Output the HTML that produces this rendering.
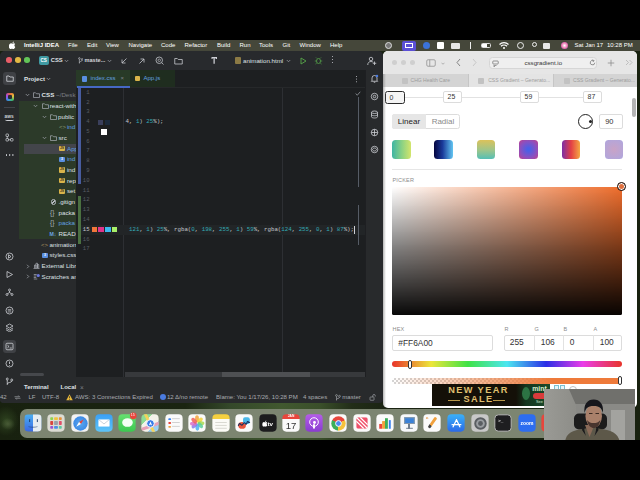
<!DOCTYPE html>
<html><head><meta charset="utf-8">
<style>
*{box-sizing:border-box;margin:0;padding:0}
html,body{width:640px;height:480px;overflow:hidden;background:#000;font-family:"Liberation Sans",sans-serif;}
#root{position:absolute;left:0;top:0;width:640px;height:480px;overflow:hidden;background:#000}
.abs{position:absolute}
#wall{left:0;top:40px;width:640px;height:400px;background:radial-gradient(ellipse 7px 6px at 8px 384px,rgba(110,130,85,.45),rgba(0,0,0,0) 100%),radial-gradient(ellipse 13px 15px at 6px 381px,rgba(55,80,38,.7),rgba(0,0,0,0) 100%),linear-gradient(90deg,#18210f 0,#1a2411 29%,#34482a 36%,#41582f 44%,#3a4f2a 50%,#222d18 55%,#1b2413 60%,#18210f 100%)}
#menubar{left:0;top:40px;width:640px;height:11px;background:#45473a;color:#fff;font-size:6.0px;line-height:11px;white-space:nowrap}
#menubar span{position:absolute;top:0}
/* IDE */
#ide{left:0;top:51px;width:383px;height:352px;background:#1d1f21;border-radius:5px 5px 4px 4px;overflow:hidden}
#ide .title{left:0;top:0;width:383px;height:19px;background:#282a2d}
.tl{position:absolute;width:5.6px;height:5.6px;border-radius:50%;top:6.4px}
#strip{left:0;top:19px;width:19px;height:333px;background:#282a2c;border-right:1px solid #282a2c}
#proj{left:19px;top:19px;width:57px;height:308px;background:#282a2c;overflow:hidden}
#rstrip{left:365px;top:19px;width:18px;height:322px;background:#282a2c;border-left:1px solid #1e1f22}
#tabs{left:76px;top:19px;width:289px;height:18px;background:#1d1f21;border-bottom:1px solid #26282a}
#editor{left:76px;top:37px;width:289px;height:289px;background:#1d1f21;overflow:hidden}
.ln{position:absolute;left:3.5px;width:10px;text-align:right;font-size:5.6px;color:#4b5059;font-family:"Liberation Mono",monospace}
.code{position:absolute;font-family:"Liberation Mono",monospace;font-size:5.77px;color:#c6c8cc;white-space:pre}
.num{color:#33aab6}
.tree{position:absolute;font-size:6.2px;color:#e6e8ec;white-space:nowrap;line-height:10px;height:10px}
#term{left:19px;top:326px;width:364px;height:14px;background:#282a2c}
#status{left:0;top:340px;width:383px;height:12px;background:#282a2c;color:#a8abb0;font-size:6.05px;line-height:12px;white-space:nowrap}
#status span{position:absolute;top:0}
/* Browser */
#br{left:383.3px;top:51px;width:254.2px;height:357px;background:#fff;border-radius:5px;overflow:hidden}
#br .tb{left:0;top:0;width:255px;height:23px;background:#e6e6e6}
#br .tabsb{left:0;top:23px;width:255px;height:12.6px;background:#d4d4d4;font-size:5.05px;color:#9c9c9c;line-height:13px;white-space:nowrap}
.inp{position:absolute;background:#fff;border:0.7px solid #dcdcdc;border-radius:2px;font-size:6.9px;color:#333;text-align:left;padding-left:3.6px}
.lbl{position:absolute;font-size:5.5px;color:#8c8c8c;letter-spacing:.2px}
.sw{position:absolute;top:86px;width:19px;height:19px;border-radius:3.5px}
/* Dock */
#dock{left:20px;top:409px;width:600px;height:28.5px;background:#7c8571;border-radius:7px;opacity:1}
.ic{position:absolute;top:3.5px;width:18px;height:18px;border-radius:4.2px;background:#fff;transform:scale(.96)}
#cam{left:544px;top:389px;width:90.5px;height:50.5px;background:#8d8f8e;overflow:hidden}
</style></head><body><div id="root">
<div id="wall" class="abs"></div>
<div id="menubar" class="abs"><svg class="abs" style="left:8.8px;top:1.3px" width="7" height="8.2" viewBox="0 0 16 18"><path fill="#fff" d="M11.2 1c.1 1-.3 2-.9 2.700-.6.700-1.600 1.300-2.500 1.200-.1-1 .4-2 .9-2.600C9.300 1.600 10.400 1.100 11.200 1zM14.300 13.200c-.4 1-.6 1.400-1.200 2.300-.8 1.200-1.800 2.700-3.200 2.700-1.200 0-1.500-.8-3.100-.8-1.600 0-2 .8-3.200.8-1.300 0-2.300-1.400-3.100-2.600C-1.100 12.300-.1 8.300 1.500 6.600c.9-1 2.100-1.600 3.300-1.600 1.300 0 2.100.8 3.200.8 1 0 1.700-.8 3.200-.8 1.100 0 2.200.6 3 1.600-2.700 1.500-2.200 5.300.1 6.600z"/></svg><span style="left:24px;font-weight:bold;">IntelliJ IDEA</span><span style="left:68px;">File</span><span style="left:87px;">Edit</span><span style="left:106px;">View</span><span style="left:128.5px;">Navigate</span><span style="left:161px;">Code</span><span style="left:184.5px;">Refactor</span><span style="left:217px;">Build</span><span style="left:239.5px;">Run</span><span style="left:259px;">Tools</span><span style="left:282.5px;">Git</span><span style="left:299.5px;">Window</span><span style="left:330px;">Help</span><span style="left:574.5px">Sat Jan 17</span><span style="left:607px">10:28 PM</span><div class="abs" style="left:384.5px;top:2px;width:7px;height:7px;border-radius:50%;border:1px solid #ddd;background:#777"></div><div class="abs" style="left:401.5px;top:0.5px;width:14px;height:10px;border-radius:2px;background:#5b4fd6"></div><div class="abs" style="left:404.5px;top:2.5px;width:8px;height:5px;border:1px solid #fff"></div><div class="abs" style="left:422.5px;top:2px;width:7px;height:7px;border-radius:50%;background:#3b72d9"></div><div class="abs" style="left:436.5px;top:2px;width:7px;height:7px;border-radius:1px;background:#fff"></div><div class="abs" style="left:451px;top:3px;width:9px;height:5.5px;border-radius:1px;background:#e6e6e6"></div><div class="abs" style="left:469.5px;top:2px;width:1.2px;height:7px;background:#eee"></div><div class="abs" style="left:481px;top:3px;width:10px;height:5px;border-radius:1.5px;border:0.8px solid #ddd"></div><div class="abs" style="left:482px;top:4px;width:5px;height:3px;background:#fff"></div><svg class="abs" style="left:499px;top:2px" width="10" height="7" viewBox="0 0 20 14"><path d="M1 5a13 13 0 0 1 18 0M4 8.500a8.500 8.500 0 0 1 12 0" stroke="#fff" stroke-width="2.400" fill="none"/><circle cx="10" cy="12" r="2" fill="#fff"/></svg><div class="abs" style="left:516.5px;top:2px;width:7px;height:7px;border-radius:50%;border:1px solid #eee"></div><div class="abs" style="left:531.5px;top:2.2px;width:5px;height:5px;border-radius:50%;border:1px solid #eee"></div><div class="abs" style="left:543px;top:3px;width:7px;height:5.5px;border-radius:1px;background:#e8e8e8"></div><div class="abs" style="left:560.5px;top:2px;width:7px;height:7px;border-radius:50%;background:radial-gradient(#fff,#e86aa8 60%,#6a7de8)"></div></div>
<div id="ide" class="abs">
 <div class="title abs"><div class="tl" style="left:6.2px;background:#e85d68"></div><div class="tl" style="left:15.0px;background:#e2b844"></div><div class="tl" style="left:24.0px;background:#62c458"></div><div class="abs" style="left:39px;top:4.5px;width:9.5px;height:9.5px;border-radius:2px;background:#3f9aa3;color:#fff;font-size:4.6px;font-weight:bold;line-height:9.5px;text-align:center">CS</div><div class="abs" style="left:50.8px;top:5px;font-size:5.8px;font-weight:bold;line-height:9px;color:#dfe1e5">CSS</div><svg class="abs" style="left:64px;top:7.8px" width="5" height="4" viewBox="0 0 10 8"><path d="M1.500 2l3.500 3.500L8.500 2" stroke="#9da0a8" stroke-width="1.500" fill="none"/></svg><svg class="abs" style="left:77.5px;top:6px" width="5.5" height="7.5" viewBox="0 0 12 16"><circle cx="3" cy="3" r="1.800" stroke="#ced0d6" stroke-width="1.300" fill="none"/><circle cx="9" cy="5" r="1.800" stroke="#ced0d6" stroke-width="1.300" fill="none"/><path d="M3 5v9M9 7c0 3-6 2-6 5" stroke="#ced0d6" stroke-width="1.300" fill="none"/></svg><div class="abs" style="left:84.5px;top:5px;font-size:5.6px;font-weight:bold;line-height:9px;color:#d4d6da">maste...</div><svg class="abs" style="left:107px;top:7.8px" width="5" height="4" viewBox="0 0 10 8"><path d="M1.500 2l3.500 3.500L8.500 2" stroke="#9da0a8" stroke-width="1.500" fill="none"/></svg><svg class="abs" style="left:119.500px;top:5.500px" width="8" height="8" viewBox="0 0 16 16"><path d="M13 3L4 12M4 5v7h7" stroke="#ced0d6" stroke-width="1.500" fill="none"/></svg><svg class="abs" style="left:137.500px;top:5.500px" width="8" height="8" viewBox="0 0 16 16"><path d="M3 13L12 4M5 4h7v7" stroke="#ced0d6" stroke-width="1.500" fill="none"/></svg><svg class="abs" style="left:155.300px;top:5px" width="9" height="9" viewBox="0 0 18 18"><circle cx="8.500" cy="8.500" r="6.500" stroke="#ced0d6" stroke-width="1.500" fill="none"/><circle cx="8.500" cy="8.500" r="2.500" stroke="#ced0d6" stroke-width="1.200" fill="none"/><path d="M13.500 13.500L17 17" stroke="#ced0d6" stroke-width="1.500"/></svg><svg class="abs" style="left:173.500px;top:5.500px" width="9" height="8" viewBox="0 0 18 16"><path d="M1.500 3h5l2 2h8v9h-15z" stroke="#ced0d6" stroke-width="1.500" fill="none"/></svg><svg class="abs" style="left:209.500px;top:5px" width="9" height="9" viewBox="0 0 18 18"><path d="M3 2h11v4h-2.500V4.500h-2v11h-2.500v-11h-2V6H3z" fill="#ced0d6"/></svg><div class="abs" style="left:234.500px;top:6px;width:6px;height:7px;border-radius:1px;background:#8c7a45"></div><div class="abs" style="left:243px;top:5px;font-size:6.2px;line-height:9px;color:#dfe1e5">animation.html</div><svg class="abs" style="left:286px;top:7.8px" width="5" height="4" viewBox="0 0 10 8"><path d="M1.500 2l3.500 3.500L8.500 2" stroke="#9da0a8" stroke-width="1.500" fill="none"/></svg><svg class="abs" style="left:299.500px;top:5.500px" width="7" height="8" viewBox="0 0 14 16"><path d="M2 2l10 6-10 6z" stroke="#57a64a" stroke-width="1.800" fill="none"/></svg><svg class="abs" style="left:313.500px;top:5px" width="9" height="9" viewBox="0 0 18 18"><ellipse cx="9" cy="10" rx="4" ry="5" stroke="#57a64a" stroke-width="1.600" fill="none"/><path d="M6 5l-2-2M12 5l2-2M1.500 10h3.500M13 10h3.500M3 16l2.500-2M15 16l-2.500-2" stroke="#57a64a" stroke-width="1.400"/></svg><div class="abs" style="left:331.8px;top:5px;width:1.400px;height:1.400px;background:#ced0d6;border-radius:50%;box-shadow:0 3px 0 #ced0d6,0 6px 0 #ced0d6"></div><svg class="abs" style="left:367px;top:4.500px" width="10" height="10" viewBox="0 0 20 20"><circle cx="8" cy="6" r="3.500" stroke="#ced0d6" stroke-width="1.600" fill="none"/><path d="M1.500 18c0-5 3-7 6.500-7 2 0 3.500.6 4.500 1.800M15 11v7M11.500 14.500h7" stroke="#ced0d6" stroke-width="1.600" fill="none"/></svg></div>
 <div id="strip" class="abs"><div class="abs" style="left:3px;top:2px;width:13px;height:13px;border-radius:3px;background:#3f4145"></div><svg class="abs" style="left:5.500px;top:5px" width="8" height="7" viewBox="0 0 16 14"><path d="M1.500 2h4.500l2 2h6.500v8.500h-13z" stroke="#dfe1e5" stroke-width="1.500" fill="none"/></svg><div class="abs" style="left:5.500px;top:22.5px;width:8px;height:8px;border-radius:2px;background:conic-gradient(#e8653a,#e8c23a,#3fb86a,#3a8be8,#a64be8,#e8653a)"></div><div class="abs" style="left:7.500px;top:24.5px;width:4px;height:4px;background:#2b2d30;border-radius:1px"></div><div class="abs" style="left:4px;top:36.5px;width:11px;height:0.8px;background:#43454a"></div><div class="abs" style="left:4.500px;top:44px;font-size:4.8px;color:#ced0d6;font-weight:bold;line-height:5px">aws</div><div class="abs" style="left:5px;top:47.5px;width:9px;height:3px;border-bottom:1px solid #ced0d6;border-radius:0 0 60% 60%"></div><svg class="abs" style="left:5px;top:62.5px" width="9" height="9" viewBox="0 0 18 18"><rect x="2" y="2" width="5" height="5" rx="1" stroke="#ced0d6" stroke-width="1.500" fill="none"/><rect x="2" y="11" width="5" height="5" rx="1" stroke="#ced0d6" stroke-width="1.500" fill="none"/><rect x="11" y="11" width="5" height="5" rx="1" stroke="#ced0d6" stroke-width="1.500" fill="none"/><path d="M4.500 7v4M7 13.500h4" stroke="#ced0d6" stroke-width="1.500"/></svg><div class="abs" style="left:5.500px;top:84px;width:1.600px;height:1.600px;border-radius:50%;background:#ced0d6;box-shadow:3.200px 0 0 #ced0d6,6.400px 0 0 #ced0d6"></div><svg class="abs" style="left:5px;top:182.0px" width="9" height="9" viewBox="0 0 18 18"><circle cx="9" cy="9" r="7" stroke="#ced0d6" stroke-width="1.600" fill="none"/><path d="M7 5.500l5 3.500-5 3.500z" stroke="#ced0d6" stroke-width="1.600" fill="none"/></svg><svg class="abs" style="left:5px;top:199.5px" width="9" height="9" viewBox="0 0 18 18"><path d="M4 3l11 6-11 6z" stroke="#ced0d6" stroke-width="1.600" fill="none"/></svg><svg class="abs" style="left:5px;top:217.5px" width="9" height="9" viewBox="0 0 18 18"><circle cx="9" cy="4" r="2" stroke="#ced0d6" stroke-width="1.600" fill="none"/><circle cx="4" cy="13" r="2" stroke="#ced0d6" stroke-width="1.600" fill="none"/><circle cx="14" cy="13" r="2" stroke="#ced0d6" stroke-width="1.600" fill="none"/><path d="M9 6v3M9 9L5 11.500M9 9l4 2.500" stroke="#ced0d6" stroke-width="1.600" fill="none"/></svg><svg class="abs" style="left:5px;top:235.5px" width="9" height="9" viewBox="0 0 18 18"><circle cx="9" cy="9" r="7" stroke="#ced0d6" stroke-width="1.600" fill="none"/><path d="M5.500 7h7M5.500 9.500h7M5.500 12h7" stroke="#ced0d6" stroke-width="1.200"/></svg><svg class="abs" style="left:5px;top:253.0px" width="9" height="9" viewBox="0 0 18 18"><path d="M9 2l7 4-7 4-7-4zM2 10l7 4 7-4M2 13.500l7 4 7-4" stroke="#ced0d6" stroke-width="1.600" fill="none"/></svg><div class="abs" style="left:3px;top:269.5px;width:13px;height:13px;border-radius:3px;background:#3f4145"></div><svg class="abs" style="left:5px;top:271.5px" width="9" height="9" viewBox="0 0 18 18"><rect x="2" y="2.500" width="14" height="13" rx="2" stroke="#ced0d6" stroke-width="1.600" fill="none"/><path d="M5 6.500l3 2.500-3 2.500M9.500 12h4" stroke="#ced0d6" stroke-width="1.600" fill="none"/></svg><svg class="abs" style="left:5px;top:289.0px" width="9" height="9" viewBox="0 0 18 18"><circle cx="9" cy="9" r="7" stroke="#ced0d6" stroke-width="1.600" fill="none"/><path d="M9 5v5M9 12v1.500" stroke="#ced0d6" stroke-width="1.700"/></svg><svg class="abs" style="left:5px;top:307.0px" width="9" height="9" viewBox="0 0 18 18"><circle cx="4.500" cy="4" r="2" stroke="#ced0d6" stroke-width="1.600" fill="none"/><circle cx="13.500" cy="6" r="2" stroke="#ced0d6" stroke-width="1.600" fill="none"/><path d="M4.500 6v10M13.500 8c0 4-9 2-9 6" stroke="#ced0d6" stroke-width="1.600" fill="none"/></svg></div>
 <div id="proj" class="abs"><div class="abs" style="left:0;top:31px;width:57px;height:138px;background:#2c3a29"></div><div class="abs" style="left:5px;top:73.5px;width:52px;height:10.600px;background:#43454a"></div><div class="abs" style="left:5px;top:3.5px;font-size:6.200px;font-weight:bold;color:#dfe1e5;line-height:10px">Project</div><svg class="abs" style="left:27px;top:7px" width="5" height="4" viewBox="0 0 10 8"><path d="M1.500 2l3.500 3.500L8.500 2" stroke="#9da0a8" stroke-width="1.500" fill="none"/></svg><svg class="abs" style="left:5.5px;top:23.299999999999997px" width="5" height="4" viewBox="0 0 10 8"><path d="M1.500 2l3.500 3.500L8.500 2" stroke="#9da0a8" stroke-width="1.500" fill="none"/></svg><svg class="abs" style="left:14.0px;top:22.299999999999997px" width="7" height="6" viewBox="0 0 14 12"><path d="M1 1.500h4l2 2h6v7.500h-12z" stroke="#b4b8bf" stroke-width="1.300" fill="none"/></svg><div class="tree" style="left:22.6px;top:20.299999999999997px;color:#dfe1e5;font-weight:bold;">CSS <span style="font-weight:normal;color:#7a7e85">~/Desk</span></div><svg class="abs" style="left:14px;top:33.97px" width="5" height="4" viewBox="0 0 10 8"><path d="M1.500 2l3.500 3.500L8.500 2" stroke="#9da0a8" stroke-width="1.500" fill="none"/></svg><svg class="abs" style="left:22.5px;top:32.97px" width="7" height="6" viewBox="0 0 14 12"><path d="M1 1.500h4l2 2h6v7.500h-12z" stroke="#b4b8bf" stroke-width="1.300" fill="none"/></svg><div class="tree" style="left:30.700000000000003px;top:30.97px;color:#dfe1e5;">react-with</div><svg class="abs" style="left:23px;top:44.64px" width="5" height="4" viewBox="0 0 10 8"><path d="M1.500 2l3.500 3.500L8.500 2" stroke="#9da0a8" stroke-width="1.500" fill="none"/></svg><svg class="abs" style="left:31.0px;top:43.64px" width="7" height="6" viewBox="0 0 14 12"><path d="M1 1.500h4l2 2h6v7.500h-12z" stroke="#b4b8bf" stroke-width="1.300" fill="none"/></svg><div class="tree" style="left:39px;top:41.64px;color:#dfe1e5;">public</div><div class="tree" style="left:40px;top:52.31px;color:#8a9a70;font-size:6px">&lt;&gt;</div><div class="tree" style="left:48px;top:52.31px;color:#62a0e0;">ind</div><svg class="abs" style="left:23px;top:65.97999999999999px" width="5" height="4" viewBox="0 0 10 8"><path d="M1.500 2l3.500 3.500L8.500 2" stroke="#9da0a8" stroke-width="1.500" fill="none"/></svg><svg class="abs" style="left:31.0px;top:64.97999999999999px" width="7" height="6" viewBox="0 0 14 12"><path d="M1 1.500h4l2 2h6v7.500h-12z" stroke="#b4b8bf" stroke-width="1.300" fill="none"/></svg><div class="tree" style="left:39.5px;top:62.97999999999999px;color:#dfe1e5;">src</div><div class="abs" style="left:40.3px;top:75.95000000000002px;width:5.400px;height:5.400px;border-radius:1px;background:#d9b44a;color:#3a3420;font-size:3.400px;font-weight:bold;line-height:5.600px;text-align:center;overflow:hidden">JS</div><div class="tree" style="left:48px;top:73.65px;color:#62a0e0;">App</div><div class="abs" style="left:40.3px;top:86.62px;width:5.400px;height:5.400px;border-radius:1px;background:#5a8fe0;color:#fff;font-size:3.400px;font-weight:bold;line-height:5.600px;text-align:center;overflow:hidden">3</div><div class="tree" style="left:48px;top:84.32px;color:#62a0e0;">ind</div><div class="abs" style="left:40.3px;top:97.29000000000002px;width:5.400px;height:5.400px;border-radius:1px;background:#d9b44a;color:#3a3420;font-size:3.400px;font-weight:bold;line-height:5.600px;text-align:center;overflow:hidden">JS</div><div class="tree" style="left:48px;top:94.99000000000001px;color:#dfe1e5;">ind</div><div class="abs" style="left:40.3px;top:107.96000000000001px;width:5.400px;height:5.400px;border-radius:1px;background:#d9b44a;color:#3a3420;font-size:3.400px;font-weight:bold;line-height:5.600px;text-align:center;overflow:hidden">JS</div><div class="tree" style="left:48px;top:105.66px;color:#dfe1e5;">rep</div><div class="abs" style="left:40.3px;top:118.63px;width:5.400px;height:5.400px;border-radius:1px;background:#d9b44a;color:#3a3420;font-size:3.400px;font-weight:bold;line-height:5.600px;text-align:center;overflow:hidden">JS</div><div class="tree" style="left:48px;top:116.32999999999998px;color:#dfe1e5;">set</div><div class="abs" style="left:31.700000000000003px;top:129.25px;width:5.500px;height:5.500px;border-radius:50%;border:0.900px solid #b4b8bf;background:linear-gradient(135deg,rgba(0,0,0,0) 42%,#b4b8bf 42% 58%,rgba(0,0,0,0) 58%)"></div><div class="tree" style="left:39.5px;top:127.0px;color:#dfe1e5;">.gitign</div><div class="tree" style="left:31px;top:137.67000000000002px;color:#b0b6be;font-size:6.400px">{}</div><div class="tree" style="left:39.5px;top:137.67000000000002px;color:#dfe1e5;">packa</div><div class="tree" style="left:31px;top:148.33999999999997px;color:#b0b6be;font-size:6.400px">{}</div><div class="tree" style="left:39.5px;top:148.33999999999997px;color:#62a0e0;">packa</div><div class="tree" style="left:30.5px;top:159.01px;color:#6aa4e4;font-size:5.200px;font-weight:bold">M&#8595;</div><div class="tree" style="left:39.5px;top:159.01px;color:#dfe1e5;">README</div><div class="tree" style="left:22px;top:169.68px;color:#a89460;font-size:6px">&lt;&gt;</div><div class="tree" style="left:30.5px;top:169.68px;color:#dfe1e5;">animation</div><div class="abs" style="left:23.299999999999997px;top:182.65000000000003px;width:5.400px;height:5.400px;border-radius:1px;background:#5a8fe0;color:#fff;font-size:3.400px;font-weight:bold;line-height:5.600px;text-align:center;overflow:hidden">3</div><div class="tree" style="left:30.5px;top:180.35000000000002px;color:#dfe1e5;">styles.css</div><svg class="abs" style="left:6.5px;top:193.51999999999998px" width="4" height="5" viewBox="0 0 8 10"><path d="M2 1.500l3.500 3.500L2 8.500" stroke="#9da0a8" stroke-width="1.500" fill="none"/></svg><svg class="abs" style="left:14px;top:192.21999999999997px" width="7" height="7" viewBox="0 0 14 14"><path d="M1 13h12M3 12V6h3v6M6 12V2.500h3V12M9 12V5h2.500v7" stroke="#b4b8bf" stroke-width="1.300" fill="none"/></svg><div class="tree" style="left:22.5px;top:191.01999999999998px;color:#dfe1e5;">External Libr</div><svg class="abs" style="left:6.5px;top:204.19px" width="4" height="5" viewBox="0 0 8 10"><path d="M2 1.500l3.500 3.500L2 8.500" stroke="#9da0a8" stroke-width="1.500" fill="none"/></svg><svg class="abs" style="left:14px;top:202.89px" width="7.500" height="7" viewBox="0 0 15 14"><path d="M1.500 3h6M1.500 6h5M1.500 9h5M1.500 12h7" stroke="#b4b8bf" stroke-width="1.300"/><circle cx="10.500" cy="5" r="3.200" fill="#6a78e0"/></svg><div class="tree" style="left:22.5px;top:201.69px;color:#dfe1e5;">Scratches an</div><div class="abs" style="left:1px;top:302.5px;width:24px;height:3.500px;border-radius:2px;background:#46484c"></div></div>
 <div id="tabs" class="abs"><div class="abs" style="left:0;top:0;width:99px;height:17px;background:#1f2d1f"></div><div class="abs" style="left:0;top:0;width:54px;height:17px;background:#283a27"></div><div class="abs" style="left:0.500px;top:15.600px;width:53.500px;height:2.200px;background:#4668c4"></div><div class="abs" style="left:5.5px;top:5.500px;width:5px;height:6px;border-radius:1px;background:#5a8fe0"></div><div class="abs" style="left:14.5px;top:4px;font-size:6px;line-height:9px;color:#62a0e0">index.css</div><div class="abs" style="left:44.5px;top:4px;font-size:6px;line-height:9px;color:#7f838a">&#215;</div><div class="abs" style="left:58.5px;top:5.500px;width:5.500px;height:5.500px;border-radius:1px;background:#d9b44a"></div><div class="abs" style="left:67.5px;top:4px;font-size:6px;line-height:9px;color:#62a0e0">App.js</div><div class="abs" style="left:279.5px;top:5.500px;width:1.300px;height:1.300px;background:#ced0d6;border-radius:50%;box-shadow:0 2.600px 0 #ced0d6,0 5.200px 0 #ced0d6"></div></div>
 <div id="editor" class="abs"><div class="abs" style="left:47.3px;top:0;width:0.800px;height:300px;background:#2d2f33"></div><div class="abs" style="left:206px;top:0;width:0.800px;height:300px;background:#2d2f33"></div><div class="abs" style="left:5px;top:136.51999999999998px;width:284px;height:10.500px;background:#222527"></div><div class="abs" style="left:2px;top:0;width:2.700px;height:96px;background:#485c9e"></div><div class="abs" style="left:2px;top:107.5px;width:2.700px;height:48.5px;background:#4a7040"></div><div class="ln" style="top:0.7999999999999972px;line-height:8px;color:#585c63">1</div><div class="ln" style="top:10.579999999999998px;line-height:8px;color:#585c63">2</div><div class="ln" style="top:20.36px;line-height:8px;color:#585c63">3</div><div class="ln" style="top:30.139999999999986px;line-height:8px;color:#585c63">4</div><div class="ln" style="top:39.91999999999999px;line-height:8px;color:#585c63">5</div><div class="ln" style="top:49.69999999999999px;line-height:8px;color:#585c63">6</div><div class="ln" style="top:59.47999999999999px;line-height:8px;color:#585c63">7</div><div class="ln" style="top:69.25999999999999px;line-height:8px;color:#585c63">8</div><div class="ln" style="top:79.03999999999999px;line-height:8px;color:#585c63">9</div><div class="ln" style="top:88.82px;line-height:8px;color:#585c63">10</div><div class="ln" style="top:98.6px;line-height:8px;color:#585c63">11</div><div class="ln" style="top:108.38px;line-height:8px;color:#585c63">12</div><div class="ln" style="top:118.15999999999997px;line-height:8px;color:#585c63">13</div><div class="ln" style="top:127.94px;line-height:8px;color:#585c63">14</div><div class="ln" style="top:137.71999999999997px;line-height:8px;color:#c4c6cc">15</div><div class="ln" style="top:147.5px;line-height:8px;color:#585c63">16</div><div class="ln" style="top:157.27999999999997px;line-height:8px;color:#585c63">17</div><div class="abs" style="left:22px;top:31.799999999999997px;width:5px;height:5px;background:#3a3f5c"></div><div class="abs" style="left:29px;top:31.799999999999997px;width:5px;height:5px;background:#1c2a3c"></div><div class="abs" style="left:25px;top:40.5px;width:6px;height:6px;background:#fff"></div><div class="code" style="left:49.5px;top:30.139999999999986px;line-height:8px">4, <span class="num">1</span>) <span class="num">25</span>%);</div><div class="abs" style="left:15.799999999999997px;top:138.51999999999998px;width:5.500px;height:5.800px;background:#f2763a"></div><div class="abs" style="left:22.400000000000006px;top:138.51999999999998px;width:5.500px;height:5.800px;background:#e0338a"></div><div class="abs" style="left:29px;top:138.51999999999998px;width:5.500px;height:5.800px;background:#3db8f0"></div><div class="abs" style="left:35.599999999999994px;top:138.51999999999998px;width:5.500px;height:5.800px;background:#a8f06a"></div><div class="code" style="left:53px;top:137.71999999999997px;line-height:8px"><span class="num">121</span>, <span class="num">1</span>) <span class="num">25</span>%, rgba(<span class="num">0</span>, <span class="num">198</span>, <span class="num">255</span>, <span class="num">1</span>) <span class="num">59</span>%, rgba(<span class="num">124</span>, <span class="num">255</span>, <span class="num">0</span>, <span class="num">1</span>) <span class="num">87</span>%);</div><div class="abs" style="left:278px;top:137.71999999999997px;width:0.900px;height:8px;background:#ced0d6"></div><div class="abs" style="left:281.5px;top:9px;width:1px;height:90px;background:#565c66"></div><div class="abs" style="left:281.5px;top:117px;width:1px;height:40px;background:#565c66"></div><svg class="abs" style="left:279px;top:2.5px" width="6" height="5" viewBox="0 0 12 10"><path d="M1.500 5l3 3.500L10.500 1.500" stroke="#9da0a8" stroke-width="1.500" fill="none"/></svg><div class="abs" style="left:49px;top:283.7px;width:240px;height:5px;background:#37393c"></div><div class="abs" style="left:146px;top:283.7px;width:88px;height:5px;background:#4e5053"></div></div>
 <div id="rstrip" class="abs"><svg class="abs" style="left:4px;top:4.0px" width="9" height="9" viewBox="0 0 18 18"><path d="M4 13V8a5 5 0 0 1 10 0v5l1.500 1.500h-13zM7.500 16.500h3" stroke="#ced0d6" stroke-width="1.600" fill="none"/><circle cx="14" cy="4" r="2.500" fill="#4a7be0"/></svg><svg class="abs" style="left:4px;top:21.5px" width="9" height="9" viewBox="0 0 18 18"><circle cx="9" cy="9" r="6.500" stroke="#ced0d6" stroke-width="1.600" fill="none"/><circle cx="9" cy="9" r="2.500" stroke="#ced0d6" stroke-width="1.600" fill="none"/></svg><svg class="abs" style="left:4px;top:39.5px" width="9" height="9" viewBox="0 0 18 18"><ellipse cx="9" cy="4.500" rx="6" ry="2.500" stroke="#ced0d6" stroke-width="1.600" fill="none"/><path d="M3 4.500v9c0 3.300 12 3.300 12 0v-9M3 9c0 3.300 12 3.300 12 0" stroke="#ced0d6" stroke-width="1.600" fill="none"/></svg><svg class="abs" style="left:4px;top:57.5px" width="9" height="9" viewBox="0 0 18 18"><circle cx="9" cy="9" r="6.500" stroke="#ced0d6" stroke-width="1.600" fill="none"/><path d="M9 2.500v13M2.500 9h13" stroke="#ced0d6" stroke-width="1.600" fill="none"/></svg><svg class="abs" style="left:4px;top:75.0px" width="9" height="9" viewBox="0 0 18 18"><circle cx="9" cy="9" r="6.500" stroke="#ced0d6" stroke-width="1.600" fill="none"/><path d="M5 9c2-4 6-4 8 0M5 9c2 4 6 4 8 0" stroke="#ced0d6" stroke-width="1.600" fill="none"/></svg></div>
 <div id="term" class="abs"><div class="abs" style="left:5px;top:5.500px;font-size:6px;font-weight:bold;color:#dfe1e5;line-height:9px">Terminal</div><div class="abs" style="left:41.5px;top:5.500px;font-size:6px;font-weight:bold;color:#dfe1e5;line-height:9px">Local</div><div class="abs" style="left:61px;top:5.500px;font-size:6.500px;color:#7f838a;line-height:9px">&#215;</div></div>
 <div id="status" class="abs"><span style="left:0px">42</span><span style="left:28.5px">LF</span><span style="left:42px">UTF-8</span><span style="left:75px">AWS: 3 Connections Expired</span><span style="left:167px">12 &#916;/no remote</span><span style="left:216px">Blame: You 1/17/26, 10:28 PM</span><span style="left:303px">4 spaces</span><span style="left:342.3px">master</span><svg class="abs" style="left:66px;top:3px" width="7" height="6.500" viewBox="0 0 14 13"><path d="M7 .5l6.500 12h-13z" fill="#e8b93a"/><path d="M7 4.500v4M7 10v1.300" stroke="#2b2d30" stroke-width="1.500"/></svg><div class="abs" style="left:159.500px;top:3px;width:6px;height:6px;border-radius:50%;background:#4a7be0"></div><svg class="abs" style="left:14px;top:3.500px" width="7" height="5" viewBox="0 0 14 10"><path d="M1 3.500h10l-2.500-2.500M13 6.500H3l2.500 2.500" stroke="#a8abb0" stroke-width="1.300" fill="none"/></svg><svg class="abs" style="left:335px;top:2.500px" width="6" height="7" viewBox="0 0 12 14"><circle cx="3" cy="3" r="1.800" stroke="#a8abb0" stroke-width="1.300" fill="none"/><circle cx="9" cy="4.500" r="1.800" stroke="#a8abb0" stroke-width="1.300" fill="none"/><path d="M3 5v8M9 6.500c0 3-6 2-6 4.500" stroke="#a8abb0" stroke-width="1.300" fill="none"/></svg><svg class="abs" style="left:368.500px;top:2.500px" width="7" height="7" viewBox="0 0 14 14"><rect x="2" y="6" width="8" height="6.500" rx="1" stroke="#a8abb0" stroke-width="1.300" fill="none"/><path d="M7.500 6V3.500a2.500 2.500 0 0 1 5 0V5" stroke="#a8abb0" stroke-width="1.300" fill="none"/></svg></div>
</div>
<div id="br" class="abs">
 <div class="tb abs"><div class="abs" style="left:8.5px;top:8.9px;width:5.600px;height:5.600px;border-radius:50%;background:#cfcfcf"></div><div class="abs" style="left:17.5px;top:8.9px;width:5.600px;height:5.600px;border-radius:50%;background:#cfcfcf"></div><div class="abs" style="left:26.5px;top:8.9px;width:5.600px;height:5.600px;border-radius:50%;background:#cfcfcf"></div><svg class="abs" style="left:42.7px;top:7.5px" width="10" height="8" viewBox="0 0 20 16"><rect x="1.500" y="1.500" width="17" height="13" rx="2.500" stroke="#8e8e8e" stroke-width="1.500" fill="none"/><path d="M7.500 1.500v13" stroke="#8e8e8e" stroke-width="1.500" fill="none"/></svg><svg class="abs" style="left:58.2px;top:10.5px" width="4" height="3" viewBox="0 0 8 6"><path d="M1 1.500l3 3 3-3" stroke="#9a9a9a" stroke-width="1.400" fill="none"/></svg><svg class="abs" style="left:72.7px;top:7px" width="5" height="9" viewBox="0 0 10 18"><path d="M8 2L2 9l6 7" stroke="#7a7a7a" stroke-width="1.800" fill="none"/></svg><svg class="abs" style="left:88.7px;top:7px" width="5" height="9" viewBox="0 0 10 18"><path d="M2 2l6 7-6 7" stroke="#c4c4c4" stroke-width="1.800" fill="none"/></svg><div class="abs" style="left:105.45px;top:5.6px;width:108.75px;height:12px;border-radius:3.500px;background:#efefef;border:0.600px solid #d6d6d6"></div><svg class="abs" style="left:109.2px;top:8.5px" width="7" height="7" viewBox="0 0 14 14"><rect x="1.500" y="2" width="11" height="6" rx="1.500" stroke="#6a6a6a" stroke-width="1.400" fill="none"/><path d="M3 11h6M3 13h3" stroke="#6a6a6a" stroke-width="1.300"/></svg><div class="abs" style="left:141.2px;top:7.3px;font-size:6.100px;line-height:9px;color:#333">cssgradient.io</div><svg class="abs" style="left:206.2px;top:8.2px" width="7" height="7" viewBox="0 0 14 14"><path d="M11.500 7.500a4.500 4.500 0 1 1-2-4" stroke="#6a6a6a" stroke-width="1.400" fill="none"/><path d="M7.500 1l2.500 2.500L7.500 6" stroke="#6a6a6a" stroke-width="1.400" fill="none"/></svg><svg class="abs" style="left:224.2px;top:7.5px" width="8" height="8" viewBox="0 0 16 16"><path d="M8 1.500v13M1.500 8h13" stroke="#8a8a8a" stroke-width="1.500"/></svg><svg class="abs" style="left:241.7px;top:8.3px" width="8" height="7" viewBox="0 0 16 14"><path d="M2 2l5 5-5 5M9 2l5 5-5 5" stroke="#b0b0b0" stroke-width="1.500" fill="none"/></svg></div>
 <div class="tabsb abs"><div class="abs" style="left:84.7px;top:0;width:85px;height:13px;background:#e4e4e4"></div><div class="abs" style="left:84.7px;top:0;width:0.700px;height:13px;background:#c6c6c6"></div><div class="abs" style="left:169.7px;top:0;width:0.700px;height:13px;background:#c6c6c6"></div><div class="abs" style="left:18.7px;top:3.500px;width:6px;height:6px;border-radius:1px;background:#c2c2c2"></div><div class="abs" style="left:27.2px;top:0;line-height:13px">CHG Health Care</div><div class="abs" style="left:95.2px;top:3.500px;width:6px;height:6px;border-radius:1px;background:#c2c2c2"></div><div class="abs" style="left:104.9px;top:0;line-height:13px">CSS Gradient – Generato...</div><div class="abs" style="left:181.2px;top:3.500px;width:6px;height:6px;border-radius:1px;background:#c2c2c2"></div><div class="abs" style="left:189.7px;top:0;line-height:13px">CSS Gradient – Generato...</div></div>
 <div id="page" class="abs" style="left:0;top:0;width:254.2px;height:357px"><div class="abs" style="left:20.7px;top:46px;width:179px;height:0.800px;background:#e2e2e2"></div><div class="inp" style="left:1.5px;top:40px;width:19.8px;height:12.8px;line-height:11.4px;border:1px solid #2a2a2a;text-align:left;padding-left:3.600px;border-radius:2.500px;background:#f4f4f4">0</div><div class="inp" style="left:59.7px;top:40.3px;width:19px;height:12.2px;line-height:10.8px;">25</div><div class="inp" style="left:136.7px;top:40.3px;width:19px;height:12.2px;line-height:10.8px;">59</div><div class="inp" style="left:199.7px;top:40.3px;width:19px;height:12.2px;line-height:10.8px;">87</div><div class="abs" style="left:8.7px;top:62.7px;width:68px;height:15.799999999999997px;border:0.700px solid #dcdcdc;border-radius:2.500px;background:#fff"></div><div class="abs" style="left:8.7px;top:62.7px;width:34px;height:15.799999999999997px;border-radius:2.500px 0 0 2.500px;background:#e6e6e6;font-size:8px;color:#222;text-align:center;line-height:15.799999999999997px">Linear</div><div class="abs" style="left:42.7px;top:62.7px;width:34px;height:15.799999999999997px;font-size:8px;color:#8a8a8a;text-align:center;line-height:15.799999999999997px">Radial</div><div class="abs" style="left:195.2px;top:63.3px;width:15px;height:15px;border-radius:50%;border:1.200px solid #222;background:#fff"></div><div class="abs" style="left:205.7px;top:69.3px;width:3px;height:3px;border-radius:50%;background:#222"></div><div class="inp" style="left:215.4px;top:62.7px;width:24.0px;height:15.0px;line-height:13.6px;font-size:7.400px;padding-left:5.500px">90</div><div class="sw" style="left:8.9px;top:89px;width:18.500px;height:18.500px;background:linear-gradient(90deg,#3fb5a3,#8fd382 55%,#d3e56c)"></div><div class="sw" style="left:51.2px;top:89px;width:18.500px;height:18.500px;background:linear-gradient(90deg,#05053f,#1a3a9a 45%,#62c6f2)"></div><div class="sw" style="left:93.4px;top:89px;width:18.500px;height:18.500px;background:linear-gradient(180deg,#dcc25a,#9cc58c 55%,#55bfb5)"></div><div class="sw" style="left:136.1px;top:89px;width:18.500px;height:18.500px;background:radial-gradient(circle,#4a5fe6 10%,#8a50c0 60%,#c2418c)"></div><div class="sw" style="left:178.7px;top:89px;width:18.500px;height:18.500px;background:linear-gradient(90deg,#7d2fa6,#e33f45 50%,#f5a743)"></div><div class="sw" style="left:221.3px;top:89px;width:18.500px;height:18.500px;background:radial-gradient(circle,#c9a3c6,#b1a6dc 90%)"></div><div class="abs" style="left:8.7px;top:117.8px;width:230.5px;height:0.800px;background:#e6e6e6"></div><div class="lbl" style="left:9.2px;top:126px;line-height:6px">PICKER</div><div class="abs" style="left:9.2px;top:135.5px;width:230px;height:128.5px;border-radius:1.500px;background:linear-gradient(to bottom,rgba(0,0,0,0) 0%,rgba(0,0,0,.52) 50%,rgba(0,0,0,.97) 100%),linear-gradient(to right,#fff,#ee6d2c)"></div><div class="abs" style="left:234.2px;top:131.0px;width:9px;height:9px;border-radius:50%;background:#e0703e;border:1.300px solid #111;box-shadow:inset 0 0 0 1px #fff"></div><div class="lbl" style="left:9.2px;top:274.5px;line-height:6px">HEX</div><div class="lbl" style="left:121.2px;top:274.5px;line-height:6px">R</div><div class="lbl" style="left:151.2px;top:274.5px;line-height:6px">G</div><div class="lbl" style="left:180.2px;top:274.5px;line-height:6px">B</div><div class="lbl" style="left:210.2px;top:274.5px;line-height:6px">A</div><div class="inp" style="left:9.2px;top:284px;width:101.0px;height:15.6px;line-height:14.2px;text-align:left;padding-left:4.800px;font-size:8.400px;border-radius:2px">#FF6A00</div><div class="inp" style="left:120.7px;top:284px;width:118.5px;height:15.500px;border-radius:2px"></div><div class="abs" style="left:120.7px;top:284px;width:29.500px;height:15.500px;line-height:15px;font-size:8.400px;color:#333;padding-left:5.800px;">255</div><div class="abs" style="left:150.7px;top:284px;width:29.500px;height:15.500px;line-height:15px;font-size:8.400px;color:#333;padding-left:5.800px;border-left:0.700px solid #e2e2e2;">106</div><div class="abs" style="left:179.7px;top:284px;width:29.500px;height:15.500px;line-height:15px;font-size:8.400px;color:#333;padding-left:5.800px;border-left:0.700px solid #e2e2e2;">0</div><div class="abs" style="left:209.7px;top:284px;width:29.500px;height:15.500px;line-height:15px;font-size:8.400px;color:#333;padding-left:5.800px;border-left:0.700px solid #e2e2e2;">100</div><div class="abs" style="left:9.2px;top:310.3px;width:230px;height:6px;border-radius:3px;background:linear-gradient(90deg,#e8342a,#ece63a 17%,#3fe246 33%,#4ce6f0 50%,#2a2ee6 67%,#ea3ce8 83%,#e8342a)"></div><div class="abs" style="left:24.5px;top:308.55px;width:4.400px;height:9.500px;border-radius:2px;background:#fff;border:1px solid #333"></div><div class="abs" style="left:9.2px;top:326.5px;width:230px;height:6px;border-radius:3px;background:linear-gradient(90deg,rgba(255,106,0,0),#ee7a3a 70%),repeating-conic-gradient(#d4d4d4 0 25%,#fff 0 50%) 0 0/4px 4px"></div><div class="abs" style="left:234.5px;top:324.75px;width:4.400px;height:9.500px;border-radius:2px;background:#fff;border:1px solid #333"></div><div class="abs" style="left:49.2px;top:333px;width:117.5px;height:22px;background:#141008;overflow:hidden"></div><div class="abs" style="left:132.7px;top:333px;width:34px;height:22px;background:linear-gradient(90deg,#141008,#14361f 30%,#1c4a2a)"></div><div class="abs" style="left:53.2px;top:335px;width:84px;text-align:center;font-size:9.200px;font-weight:bold;color:#e0c070;letter-spacing:1.400px;line-height:8.800px">NEW YEAR<br>SALE</div><div class="abs" style="left:149.0px;top:334px;font-size:6.800px;font-weight:bold;color:#d8f0d0;line-height:8px">mint</div><div class="abs" style="left:149.7px;top:342px;width:16px;height:6px;border-radius:3px;background:#d93b3b"></div><div class="abs" style="left:170.7px;top:333.5px;width:5px;height:5px;border:0.700px solid #7ac0d0;background:#e8f4f8"></div><div class="abs" style="left:176.7px;top:333.5px;width:5px;height:5px;border:0.700px solid #7ac0d0;background:#e8f4f8"></div><div class="abs" style="left:186.2px;top:334.5px;width:8px;height:8px;border-radius:50%;border:0.800px solid #c0c0c0"></div><div class="abs" style="left:64.7px;top:348.5px;width:12px;height:0.700px;background:#b8984a"></div><div class="abs" style="left:109.7px;top:348.5px;width:12px;height:0.700px;background:#b8984a"></div><div class="abs" style="left:152.7px;top:349.2px;font-size:3.800px;color:#cfe6cf;line-height:5px">See</div><div class="abs" style="left:0;top:23px;width:2.500px;height:334px;background:linear-gradient(90deg,rgba(120,120,120,.55),rgba(255,255,255,0))"></div><div class="abs" style="left:138.7px;top:336px;width:8px;height:13px;border-radius:50% 50% 50% 50%;background:#2f7a48;opacity:.9"></div><div class="abs" style="left:249.2px;top:47px;width:3.200px;height:19px;border-radius:2px;background:#b4b4b4"></div></div>
</div>
<div id="dock" class="abs"><div class="ic" style="left:3.5px;top:4.7px;background:linear-gradient(90deg,rgba(0,0,0,0) 0 52%,#e6ecf2 52%),linear-gradient(180deg,#4aaef2,#3a68e4);"><div class="abs" style="left:4px;top:10.500px;width:10px;height:3px;border-bottom:1px solid #1c3c6a;border-radius:0 0 50% 50%"></div><div class="abs" style="left:4.500px;top:5px;width:1px;height:2.500px;background:#1c3c6a"></div><div class="abs" style="left:12.500px;top:5px;width:1px;height:2.500px;background:#1c3c6a"></div></div><div class="ic" style="left:27px;top:4.7px;background:#dcdcd4;"><div class="abs" style="left:3.0px;top:3.0px;width:3.400px;height:3.400px;border-radius:0.800px;background:#8fd14f"></div><div class="abs" style="left:7.3px;top:3.0px;width:3.400px;height:3.400px;border-radius:0.800px;background:#f0c33c"></div><div class="abs" style="left:11.6px;top:3.0px;width:3.400px;height:3.400px;border-radius:0.800px;background:#e8903a"></div><div class="abs" style="left:3.0px;top:7.3px;width:3.400px;height:3.400px;border-radius:0.800px;background:#d9443c"></div><div class="abs" style="left:7.3px;top:7.3px;width:3.400px;height:3.400px;border-radius:0.800px;background:#9aa0a8"></div><div class="abs" style="left:11.6px;top:7.3px;width:3.400px;height:3.400px;border-radius:0.800px;background:#e0506a"></div><div class="abs" style="left:3.0px;top:11.6px;width:3.400px;height:3.400px;border-radius:0.800px;background:#9a55d0"></div><div class="abs" style="left:7.3px;top:11.6px;width:3.400px;height:3.400px;border-radius:0.800px;background:#4a8fe8"></div><div class="abs" style="left:11.6px;top:11.6px;width:3.400px;height:3.400px;border-radius:0.800px;background:#5fc8a0"></div></div><div class="ic" style="left:51px;top:4.7px;background:#f2f2f2;"><div class="abs" style="left:1.500px;top:1.500px;width:15px;height:15px;border-radius:50%;background:radial-gradient(#5aa8f0,#2f7de0)"></div><svg class="abs" style="left:3px;top:3px" width="12" height="12" viewBox="0 0 12 12"><path d="M10 2L5 5l2 2z" fill="#e8453c"/><path d="M2 10l5-3-2-2z" fill="#fff"/></svg></div><div class="ic" style="left:74.75px;top:4.7px;background:linear-gradient(180deg,#3aa0f5,#5cc4f8);"><svg class="abs" style="left:3px;top:5px" width="12" height="8" viewBox="0 0 12 8"><rect x="0" y="0" width="12" height="8" rx="1" fill="#fff"/><path d="M0.500 0.500L6 5l5.500-4.500" stroke="#b8c4d0" stroke-width="0.800" fill="none"/></svg></div><div class="ic" style="left:98px;top:4.7px;background:linear-gradient(180deg,#66e070,#3cc850);overflow:visible"><div class="abs" style="left:3.500px;top:4px;width:11px;height:8.500px;border-radius:50%;background:#f4fff4"></div><div class="abs" style="left:11.500px;top:-2px;width:7px;height:7px;border-radius:50%;background:#e8453c;color:#fff;font-size:3.600px;line-height:7px;text-align:center">15</div></div><div class="ic" style="left:121px;top:4.7px;background:linear-gradient(135deg,#8fdc96 0 30%,#f4f2ea 30% 70%,#9ad0f4 70%);overflow:hidden"><div class="abs" style="left:7px;top:-2px;width:3px;height:22px;background:#f6d25a;transform:rotate(-25deg)"></div><div class="abs" style="left:-2px;top:11px;width:22px;height:2.500px;background:#e8a0b8;transform:rotate(-20deg)"></div><div class="abs" style="left:4.500px;top:4.500px;width:9px;height:9px;border-radius:50%;background:#3a7de8;border:1px solid #fff"></div><svg class="abs" style="left:6.500px;top:6.500px" width="5" height="5" viewBox="0 0 10 10"><path d="M5 1L1.500 9 5 7l3.500 2z" fill="#fff"/></svg></div><div class="ic" style="left:144.75px;top:4.7px;background:#fafafa;"><div class="abs" style="left:3px;top:3.500px;width:2.500px;height:2.500px;border-radius:50%;background:#3a82f0;box-shadow:0 4px 0 #e8453c,0 8px 0 #f0a03c"></div><div class="abs" style="left:7px;top:4.300px;width:8px;height:0.800px;background:#d0d0d0;box-shadow:0 4px 0 #d0d0d0,0 8px 0 #d0d0d0"></div></div><div class="ic" style="left:168px;top:4.7px;background:#fafafa;"><div class="abs" style="left:6.80px;top:1.30px;width:4.400px;height:7px;border-radius:50%;background:#f5a53c;opacity:.85;transform:rotate(0deg)"></div><div class="abs" style="left:9.77px;top:2.53px;width:4.400px;height:7px;border-radius:50%;background:#f3d23a;opacity:.85;transform:rotate(45deg)"></div><div class="abs" style="left:11.00px;top:5.50px;width:4.400px;height:7px;border-radius:50%;background:#a8d850;opacity:.85;transform:rotate(90deg)"></div><div class="abs" style="left:9.77px;top:8.47px;width:4.400px;height:7px;border-radius:50%;background:#5ccf9a;opacity:.85;transform:rotate(135deg)"></div><div class="abs" style="left:6.80px;top:9.70px;width:4.400px;height:7px;border-radius:50%;background:#4ab0f0;opacity:.85;transform:rotate(180deg)"></div><div class="abs" style="left:3.83px;top:8.47px;width:4.400px;height:7px;border-radius:50%;background:#8a7ae8;opacity:.85;transform:rotate(225deg)"></div><div class="abs" style="left:2.60px;top:5.50px;width:4.400px;height:7px;border-radius:50%;background:#d870c8;opacity:.85;transform:rotate(270deg)"></div><div class="abs" style="left:3.83px;top:2.53px;width:4.400px;height:7px;border-radius:50%;background:#f0605a;opacity:.85;transform:rotate(315deg)"></div></div><div class="ic" style="left:191.75px;top:4.7px;background:linear-gradient(180deg,#f5d040 0 26%,#fbfbf6 26%);"><div class="abs" style="left:3px;top:8px;width:12px;height:0.700px;background:#d8d8d0;box-shadow:0 3px 0 #d8d8d0,0 6px 0 #d8d8d0"></div></div><div class="ic" style="left:215px;top:4.7px;background:#fafafa;"><div class="abs" style="left:3px;top:8px;width:8px;height:7px;border-radius:50%;background:#e8553c"></div><div class="abs" style="left:8px;top:3px;width:7px;height:7px;border-radius:2px;background:#4ab8e8"></div><svg class="abs" style="left:2px;top:6px" width="14" height="8" viewBox="0 0 14 8"><path d="M1 6c2-6 3 2 5-2s3 3 4-1 2 1 3-1" stroke="#1c2c5a" stroke-width="1.200" fill="none"/></svg></div><div class="ic" style="left:238.5px;top:4.7px;background:#1c1c1e;"><svg class="abs" style="left:2.500px;top:5.500px" width="6" height="7" viewBox="0 0 16 18"><path fill="#fff" d="M11.200 1c.1 1-.3 2-.9 2.700-.6.700-1.600 1.300-2.500 1.200-.1-1 .4-2 .9-2.600C9.300 1.600 10.400 1.100 11.200 1zM14.300 13.200c-.4 1-.6 1.400-1.200 2.300-.8 1.200-1.800 2.700-3.200 2.700-1.200 0-1.500-.8-3.100-.8-1.600 0-2 .8-3.200.8-1.300 0-2.300-1.400-3.100-2.600C-1.100 12.300-.1 8.300 1.500 6.600c.9-1 2.100-1.600 3.300-1.600 1.300 0 2.100.8 3.200.8 1 0 1.700-.8 3.200-.8 1.100 0 2.200.6 3 1.600-2.700 1.500-2.200 5.300.1 6.600z"/></svg><div class="abs" style="left:8.500px;top:5.500px;color:#fff;font-size:6.500px;line-height:7px;font-weight:bold">tv</div></div><div class="ic" style="left:262px;top:4.7px;background:linear-gradient(180deg,#e8453c 0 28%,#fafafa 28%);"><div class="abs" style="left:0;top:0.300px;width:18px;text-align:center;color:#fff;font-size:3.400px;line-height:4.500px;font-weight:bold">JAN</div><div class="abs" style="left:0;top:5.500px;width:18px;text-align:center;color:#333;font-size:10px;line-height:11px">17</div></div><div class="ic" style="left:285px;top:4.7px;background:linear-gradient(180deg,#b45ce8,#8a3cd0);"><div class="abs" style="left:4px;top:3px;width:10px;height:10px;border-radius:50%;border:1.200px solid #fff"></div><div class="abs" style="left:7.500px;top:6.500px;width:3px;height:3px;border-radius:50%;background:#fff"></div><div class="abs" style="left:8px;top:10px;width:2px;height:5px;border-radius:1px;background:#fff"></div></div><div class="ic" style="left:309px;top:4.7px;background:#fafafa;"><div class="abs" style="left:1.500px;top:1.500px;width:15px;height:15px;border-radius:50%;background:conic-gradient(from -60deg,#e8453c 0 120deg,#f5c23c 120deg 240deg,#3cae5a 240deg 360deg)"></div><div class="abs" style="left:5.500px;top:5.500px;width:7px;height:7px;border-radius:50%;background:#4a8af0;border:1.200px solid #fff"></div></div><div class="ic" style="left:332.75px;top:4.7px;background:#fafafa;"><svg class="abs" style="left:3px;top:3px" width="12" height="12" viewBox="0 0 12 12"><rect width="12" height="12" rx="2" fill="#f0506a"/><path d="M0 0l12 12M0 4l8 8M4 0l8 8" stroke="#fff" stroke-width="1.300"/></svg></div><div class="ic" style="left:356px;top:4.7px;background:#fafafa;"><div class="abs" style="left:3px;top:9.500px;width:2.600px;height:5.500px;background:#e8453c"></div><div class="abs" style="left:6.200px;top:7px;width:2.600px;height:8px;background:#f0a03c"></div><div class="abs" style="left:9.400px;top:4px;width:2.600px;height:11px;background:#3cae5a"></div><div class="abs" style="left:12.600px;top:6px;width:2.600px;height:9px;background:#3a82f0"></div></div><div class="ic" style="left:379.75px;top:4.7px;background:#f6f8fa;"><div class="abs" style="left:3.500px;top:3px;width:11px;height:6.500px;background:#3a82d8;border:0.800px solid #8a9aa8"></div><div class="abs" style="left:8.400px;top:9.500px;width:1.200px;height:5px;background:#6a7a8a"></div><div class="abs" style="left:5.500px;top:14.300px;width:7px;height:1px;background:#6a7a8a"></div></div><div class="ic" style="left:403px;top:4.7px;background:#fafafa;"><div class="abs" style="left:8px;top:2px;width:2.600px;height:13px;background:linear-gradient(180deg,#f0a03c 0 75%,#444 75%);transform:rotate(35deg);border-radius:1px"></div><div class="abs" style="left:2.500px;top:2px;color:#e8903a;font-size:6px;line-height:6px;font-weight:bold">&#8220;</div></div><div class="ic" style="left:426.75px;top:4.7px;background:linear-gradient(180deg,#3ab0f8,#2a6ae8);"><svg class="abs" style="left:3.500px;top:3.500px" width="11" height="11" viewBox="0 0 11 11"><path d="M5.500 1.500L2 9M5.500 1.500L9 9M0.800 6.800h9.400" stroke="#fff" stroke-width="1.300" fill="none" stroke-linecap="round"/></svg></div><div class="ic" style="left:450.5px;top:4.7px;background:#c8c8c8;"><div class="abs" style="left:2.500px;top:2.500px;width:13px;height:13px;border-radius:50%;border:2px solid #5a5e62;background:#9a9ea2"></div><div class="abs" style="left:6.500px;top:6.500px;width:5px;height:5px;border-radius:50%;background:#5a5e62"></div></div><div class="ic" style="left:474px;top:4.7px;background:#1e1e20;border:0.800px solid #b8b8b8"><div class="abs" style="left:3px;top:3px;color:#e8e8e8;font-size:4.500px;line-height:5px;font-family:'Liberation Mono',monospace;font-weight:bold">&gt;_</div></div><div class="ic" style="left:497.75px;top:4.7px;background:#2d6df0;"><div class="abs" style="left:0;top:5.500px;width:18px;text-align:center;color:#fff;font-size:5.200px;line-height:7px;font-weight:bold">zoom</div></div><div class="ic" style="left:521px;top:4.7px;background:#e8453c;"></div></div>
<div id="cam" class="abs"><svg class="abs" style="left:0;top:0" width="91" height="51" viewBox="0 0 91 51">
<defs><filter id="bl" x="-10%" y="-10%" width="120%" height="120%"><feGaussianBlur stdDeviation="0.7"/></filter>
<linearGradient id="lw" x1="0" x2="1"><stop offset="0" stop-color="#9b9b96"/><stop offset="1" stop-color="#8d8d88"/></linearGradient></defs>
<rect width="91" height="51" fill="#858581"/>
<g filter="url(#bl)">
<rect x="-2" y="-2" width="95" height="18" fill="#6f6f6c"/>
<rect x="28" y="15" width="65" height="40" fill="#8a8a86"/>
<polygon points="-2,-2 24,-2 32,16 32,53 -2,53" fill="url(#lw)"/>
<rect x="67" y="21" width="14" height="32" fill="#a3a39f"/>
<rect x="30" y="24.500" width="33" height="16" rx="5" fill="#1b1b1d"/>
<path d="M21 53c1-9 8-12 18-13l9-2 9 2c10 1 17 4 19 13z" fill="#5d584a"/>
<path d="M41 36l4.500 12 5-12z" fill="#8a6a58"/>
<path d="M40 30c-1 6 1 14 2 17l-4-6zM52.500 30c1 6-1 14-2 17l4-6z" fill="#1b1b1d"/>
<ellipse cx="49.700" cy="27" rx="8.300" ry="11.500" fill="#a9806b"/>
<path d="M43 31c1 6 4 8 6.700 8s5.700-2 6.700-8c-2 2.500-4 3-6.700 3s-4.700-.5-6.700-3z" fill="#4a362e"/>
<path d="M40.500 24c-1-9 3-13.500 9.200-13.500s10.200 4.500 9.200 13.500c-1.500-5-3-7-9.200-7s-7.700 2-9.200 7z" fill="#17171a"/>
<path d="M45 24.500h3.500M51.500 24.500h3.500" stroke="#3a2a24" stroke-width="1"/>
</g></svg></div>
</div></body></html>
